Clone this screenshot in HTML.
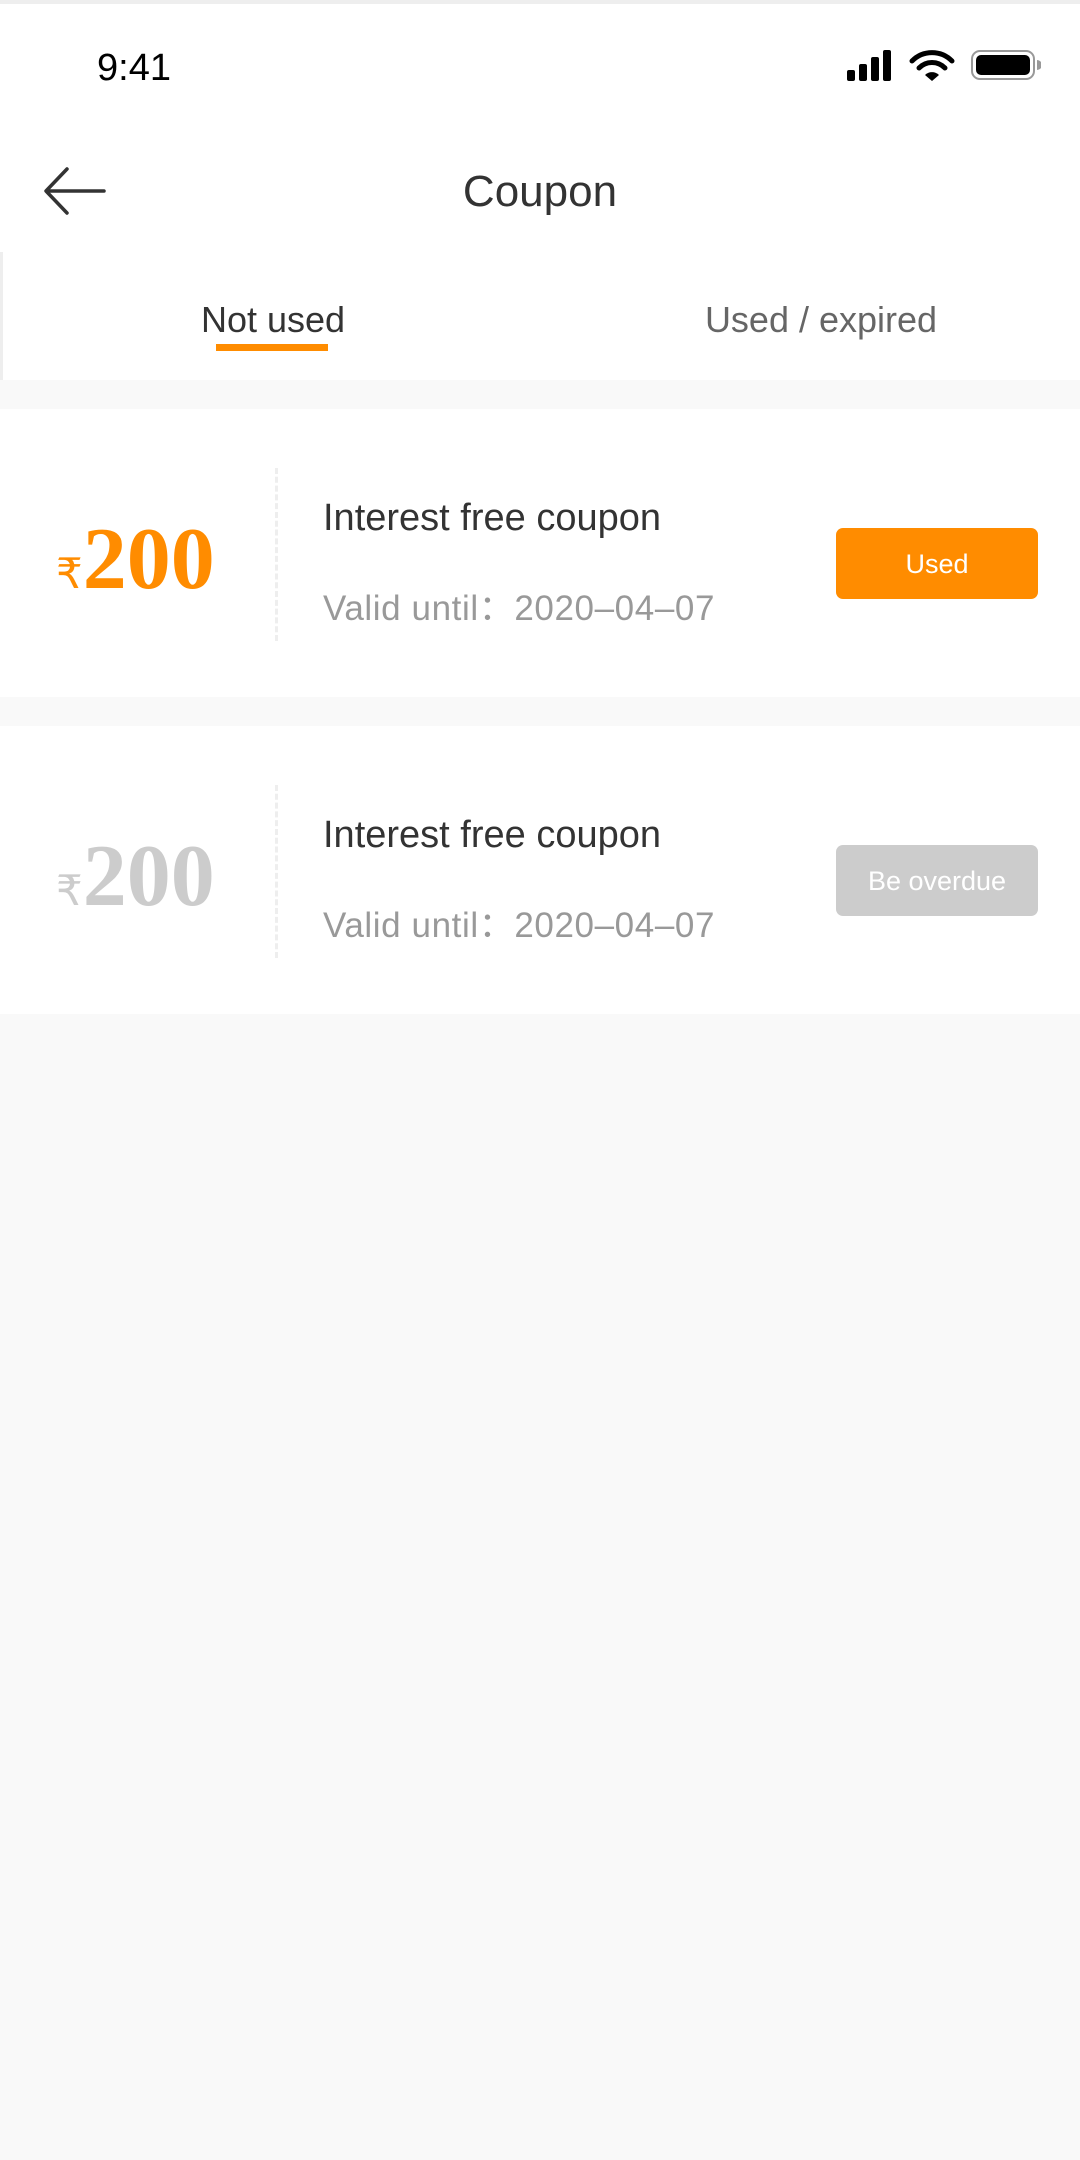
<!DOCTYPE html>
<html><head><meta charset="utf-8"><style>
*{margin:0;padding:0;box-sizing:border-box}
body{width:1080px;height:2160px;background:#f9f9f9;font-family:"Liberation Sans",sans-serif;position:relative;overflow:hidden}
.abs{position:absolute}
.top{position:absolute;left:0;top:0;width:1080px;height:252px;background:#fff}
.tabs{position:absolute;left:0;top:252px;width:1080px;height:128px;background:#fff;border-left:3px solid #eee}
.card{position:absolute;left:0;width:1080px;height:288px;background:#fff}
.amt{position:absolute;left:56px;top:107px;font-family:"Liberation Serif",serif;font-weight:bold;font-size:88px;line-height:88px;white-space:nowrap}
.amt span{font-size:42px;font-weight:normal}
.dash{position:absolute;left:275px;top:59px;height:173px;border-left:3px dashed #eee}
.t1{position:absolute;left:323px;top:88px;font-size:38px;color:#333;white-space:nowrap}
.t2{position:absolute;left:323px;top:171px;font-size:35px;color:#999;white-space:nowrap;letter-spacing:0.6px}
.btn{position:absolute;left:836px;top:119px;width:202px;height:71px;border-radius:7px;color:#fff;font-size:27px;text-align:center;line-height:73px}
</style></head><body>
<div class="top"></div>
<div class="abs" style="left:0;top:0;width:1080px;height:4px;background:#eee"></div>
<div class="abs" style="left:97px;top:47px;font-size:38px;color:#000">9:41</div>
<svg class="abs" style="left:845px;top:48px" width="196" height="36" viewBox="0 0 196 36">
<rect x="2" y="22" width="8" height="11" rx="2"/><rect x="14" y="16" width="8" height="17" rx="2"/><rect x="26" y="9" width="8" height="24" rx="2"/><rect x="38" y="2" width="8" height="31" rx="2"/>
<path d="M67 13a28 28 0 0 1 40 0" stroke="#000" stroke-width="5" fill="none" stroke-linecap="round"/>
<path d="M74 20a18 18 0 0 1 26 0" stroke="#000" stroke-width="5" fill="none" stroke-linecap="round"/>
<path d="M80 27l7 6 7-6a10 10 0 0 0-14 0z"/>
<rect x="127" y="3" width="62" height="28" rx="8" fill="none" stroke="#999" stroke-width="2"/>
<rect x="131" y="7" width="54" height="20" rx="5"/>
<path d="M192 12v10a4 4 0 0 0 0-10z" fill="#999"/>
</svg>
<svg class="abs" style="left:42px;top:166px" width="66" height="50" viewBox="0 0 66 50"><path d="M62 25H5M25 3L4 25l21 22" stroke="#333" stroke-width="3.5" fill="none" stroke-linecap="round" stroke-linejoin="round"/></svg>
<div class="abs" style="left:0;width:1080px;top:167px;text-align:center;font-size:44px;color:#333">Coupon</div>
<div class="tabs"></div>
<div class="abs" style="left:173px;width:200px;top:299px;text-align:center;font-size:36px;color:#333">Not used</div>
<div class="abs" style="left:216px;top:344px;width:112px;height:7px;background:#ff8c00"></div>
<div class="abs" style="left:671px;width:300px;top:299px;text-align:center;font-size:36px;color:#666">Used / expired</div>

<div class="card" style="top:409px">
<div class="amt" style="color:#ff8c00"><span>₹</span>200</div>
<div class="dash"></div>
<div class="t1">Interest free coupon</div>
<div class="t2">Valid until：2020–04–07</div>
<div class="btn" style="background:#ff8c00">Used</div>
</div>
<div class="card" style="top:726px">
<div class="amt" style="color:#ccc"><span>₹</span>200</div>
<div class="dash"></div>
<div class="t1">Interest free coupon</div>
<div class="t2">Valid until：2020–04–07</div>
<div class="btn" style="background:#ccc">Be overdue</div>
</div>
</body></html>
